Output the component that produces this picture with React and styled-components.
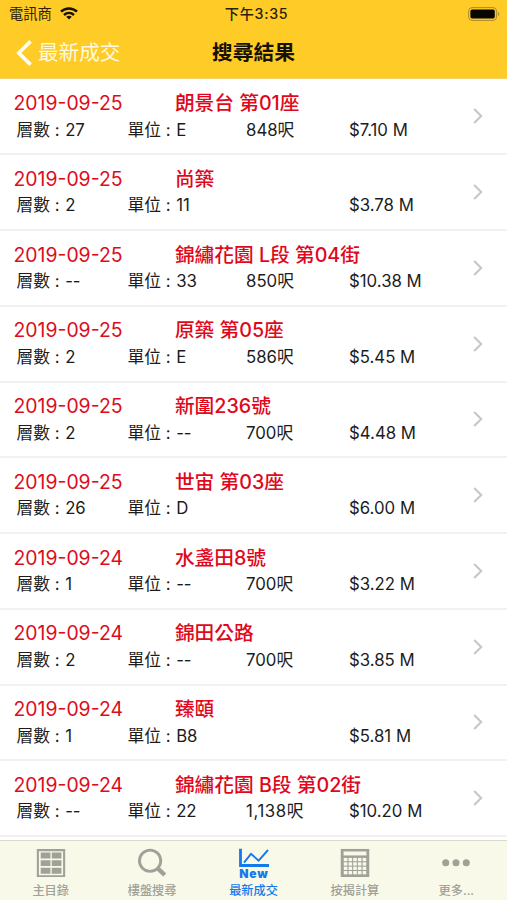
import React from "react";
import styled, { createGlobalStyle } from "styled-components";

const GlobalStyle = createGlobalStyle`
  *,
  *:before,
  *:after {
    box-sizing: border-box;
  }

  body {
    margin: 0;
    overflow: hidden;
    background: #fff;
    font-family: Inter, "Noto Sans CJK TC", sans-serif;
    color: #1c1c1c;
  }
`;

const Screen = styled.div`
  display: flex;
  flex-direction: column;
  width: 507px;
  height: 900px;
  overflow: hidden;
`;

const Header = styled.header`
  flex: none;
  height: 79px;
  background: #ffcb27;
  border-bottom: 1px solid #f3cf68;
`;

const StatusBar = styled.div`
  display: grid;
  grid-template-columns: 1fr auto 1fr;
  align-items: center;
  height: 27px;
  padding: 0 7px 0 9px;
  font-size: 14.3px;
  line-height: 27px;
  color: #2a2109;
`;

const Carrier = styled.div`
  display: flex;
  align-items: center;
  gap: 8px;
`;

const Time = styled.div`
  padding-left: 4px;
  font-weight: 500;
  font-size: 14.2px;
  letter-spacing: 0.7px;
`;

const Battery = styled.svg`
  justify-self: end;
`;

const NavBar = styled.nav`
  display: grid;
  grid-template-columns: 1fr auto 1fr;
  align-items: center;
  height: 51px;
  padding: 0 16px;
`;

const Back = styled.a`
  display: flex;
  align-items: center;
  gap: 6px;
  color: #fff9e0;
  font-size: 20.6px;
  line-height: 51px;
`;

const Title = styled.h1`
  margin: 0;
  font-size: 20.8px;
  font-weight: 700;
  line-height: 51px;
  color: #171204;
`;

const List = styled.main`
  flex: 1;
  min-height: 0;
  padding-top: 0.6px;
  overflow: hidden;
`;

const Row = styled.article`
  display: flex;
  align-items: center;
  justify-content: space-between;
  height: 75.75px;
  padding: 0 24px 0 13.5px;
  border-bottom: 2px solid #f1f1f1;
`;

const Info = styled.div`
  flex: 1;
  margin-top: -1px;
`;

const Headline = styled.div`
  display: grid;
  grid-template-columns: 161.4px 1fr;
  height: 27.5px;
  line-height: 28px;
  color: #dc0d20;
`;

const DateText = styled.span`
  font-size: 19.4px;
`;

const Name = styled.span`
  font-size: 19.7px;
  font-weight: 500;
  white-space: nowrap;
  color: #e0081b;
`;

const Details = styled.div`
  display: grid;
  grid-template-columns: 111px 118.5px 103px 1fr;
  height: 26px;
  padding-left: 3px;
  font-size: 16.8px;
  line-height: 26px;
  white-space: nowrap;
`;

const Label = styled.span`
  margin-right: 5.5px;
`;

const Area = styled.span`
  letter-spacing: ${(props) => (props.$wide ? 0.6 : 0)}px;
`;

const TabBar = styled.footer`
  flex: none;
  display: flex;
  height: 60.5px;
  background: #f9f9ea;
  border-top: 1px solid #d9d9cd;
`;

const Tab = styled.a`
  flex: 1;
  display: flex;
  flex-direction: column;
  align-items: center;
  padding-top: 7px;
  color: ${(props) => (props.$active ? "#1479ec" : "#a0a198")};
  font-size: 12.2px;
  font-weight: 500;
  line-height: 18px;

  svg {
    display: block;
    margin-bottom: 5px;
  }
`;

const ChartBadge = styled.span`
  display: flex;
  flex-direction: column;
  align-items: center;
  height: 36px;

  svg {
    margin: 0;
  }
`;

const NewText = styled.b`
  font-size: 12px;
  font-weight: 900;
  line-height: 14px;
  letter-spacing: 0.9px;
  margin-right: -0.9px;
`;

const deals = [
  { date: "2019-09-25", name: "朗景台 第01座", floor: "27", unit: "E", area: "848呎", price: "$7.10 M" },
  { date: "2019-09-25", name: "尚築", floor: "2", unit: "11", area: "", price: "$3.78 M" },
  { date: "2019-09-25", name: "錦繡花園 L段 第04街", floor: "--", unit: "33", area: "850呎", price: "$10.38 M" },
  { date: "2019-09-25", name: "原築 第05座", floor: "2", unit: "E", area: "586呎", price: "$5.45 M" },
  { date: "2019-09-25", name: "新圍236號", floor: "2", unit: "--", area: "700呎", price: "$4.48 M" },
  { date: "2019-09-25", name: "世宙 第03座", floor: "26", unit: "D", area: "", price: "$6.00 M" },
  { date: "2019-09-24", name: "水盞田8號", floor: "1", unit: "--", area: "700呎", price: "$3.22 M" },
  { date: "2019-09-24", name: "錦田公路", floor: "2", unit: "--", area: "700呎", price: "$3.85 M" },
  { date: "2019-09-24", name: "臻頤", floor: "1", unit: "B8", area: "", price: "$5.81 M" },
  { date: "2019-09-24", name: "錦繡花園 B段 第02街", floor: "--", unit: "22", area: "1,138呎", price: "$10.20 M" },
];

const WifiIcon = () => (
  <svg width="18" height="13" viewBox="0 0 18 13" fill="none" stroke="#171204" strokeWidth="2.4">
    <path d="M1 4.7C5.5.4 12.5.4 17 4.7" />
    <path d="M4 8c2.9-2.7 7.1-2.7 10 0" />
    <path d="M9 12.6 6.2 9.8c1.7-1.3 3.9-1.3 5.6 0z" fill="#171204" stroke="none" />
  </svg>
);

const BatteryIcon = () => (
  <Battery width="32" height="14" viewBox="0 0 32 14">
    <rect x=".6" y=".6" width="28" height="12.8" rx="3.6" fill="none" stroke="#a98a2b" />
    <rect x="2.4" y="2.4" width="24.4" height="9.2" rx="1.8" fill="#080600" />
    <path d="M30 4.8c1.6.6 1.6 3.8 0 4.4z" fill="#a98a2b" />
  </Battery>
);

const BackIcon = () => (
  <svg width="16" height="26" viewBox="0 0 16 26" fill="none" stroke="#fffdf3" strokeWidth="3.6">
    <path d="M14.6 1.4 2.8 13l11.8 11.6" />
  </svg>
);

const ChevronIcon = () => (
  <svg width="10" height="16" viewBox="0 0 10 16" fill="none" stroke="#c7c7cb" strokeWidth="2.1">
    <path d="m1.2 1 7 7-7 7" />
  </svg>
);

const MenuIcon = () => (
  <svg width="30" height="31" viewBox="0 0 30 31">
    <path d="M1.2 2.2h27.6v27.6H1.2z" fill="none" stroke="currentColor" strokeWidth="2.2" />
    <path
      d="M4.2 4.8h10.2v6.2H4.2zM15.8 4.8H26V11H15.8zM4.2 12.8h10.2V19H4.2zM15.8 12.8H26V19H15.8zM4.2 20.8h10.2V27H4.2zM15.8 20.8H26V27H15.8z"
      fill="currentColor"
    />
  </svg>
);

const SearchIcon = () => (
  <svg width="30" height="31" viewBox="0 0 30 31" fill="none" stroke="currentColor">
    <circle cx="13" cy="13.4" r="11.2" strokeWidth="3" />
    <path d="m21 21.4 7.4 7" strokeWidth="4.6" />
  </svg>
);

const ChartIcon = () => (
  <ChartBadge>
    <svg width="30" height="19" viewBox="0 0 30 19" fill="none" stroke="currentColor">
      <path d="M1.5.8v16.7H30" strokeWidth="2.8" />
      <path d="m5 14.6 7-8.8 7.6 6.8 9.4-10.6" strokeWidth="1.9" />
    </svg>
    <NewText>New</NewText>
  </ChartBadge>
);

const CalculatorIcon = () => (
  <svg width="30" height="31" viewBox="0 0 30 31">
    <path d="M0 1h30v30H0z" fill="currentColor" />
    <g fill="#f9f9ea">
      <path d="M3 3.6h24v4.2H3z" />
      {[10.4, 15, 19.6, 24.2].map((y) =>
        [3.2, 8.2, 13.1, 18, 23].map((x) => (
          <rect key={`${x}-${y}`} x={x} y={y} width="3.8" height="3.5" />
        ))
      )}
    </g>
  </svg>
);

const MoreIcon = () => (
  <svg width="30" height="31" viewBox="0 0 30 31" fill="currentColor">
    <circle cx="4.2" cy="15.6" r="3.7" />
    <circle cx="15" cy="15.6" r="3.7" />
    <circle cx="25.8" cy="15.6" r="3.7" />
  </svg>
);

const tabs = [
  { label: "主目錄", Icon: MenuIcon },
  { label: "樓盤搜尋", Icon: SearchIcon },
  { label: "最新成交", Icon: ChartIcon, active: true },
  { label: "按揭計算", Icon: CalculatorIcon },
  { label: "更多...", Icon: MoreIcon },
];

const Deal = ({ date, name, floor, unit, area, price }) => (
  <Row>
    <Info>
      <Headline>
        <DateText>{date}</DateText>
        <Name>{name}</Name>
      </Headline>
      <Details>
        <span>
          <Label>層數 :</Label>
          {floor}
        </span>
        <span>
          <Label>單位 :</Label>
          {unit}
        </span>
        <Area $wide={area.length > 4}>{area}</Area>
        <span>{price}</span>
      </Details>
    </Info>
    <ChevronIcon />
  </Row>
);

const App = () => (
  <>
    <GlobalStyle />
    <Screen>
      <Header>
        <StatusBar>
          <Carrier>
            電訊商
            <WifiIcon />
          </Carrier>
          <Time>下午3:35</Time>
          <BatteryIcon />
        </StatusBar>
        <NavBar>
          <Back>
            <BackIcon />
            最新成交
          </Back>
          <Title>搜尋結果</Title>
        </NavBar>
      </Header>
      <List>
        {deals.map((deal, i) => (
          <Deal key={i} {...deal} />
        ))}
      </List>
      <TabBar>
        {tabs.map(({ label, Icon, active }) => (
          <Tab key={label} $active={active}>
            <Icon />
            {label}
          </Tab>
        ))}
      </TabBar>
    </Screen>
  </>
);

export default App;
